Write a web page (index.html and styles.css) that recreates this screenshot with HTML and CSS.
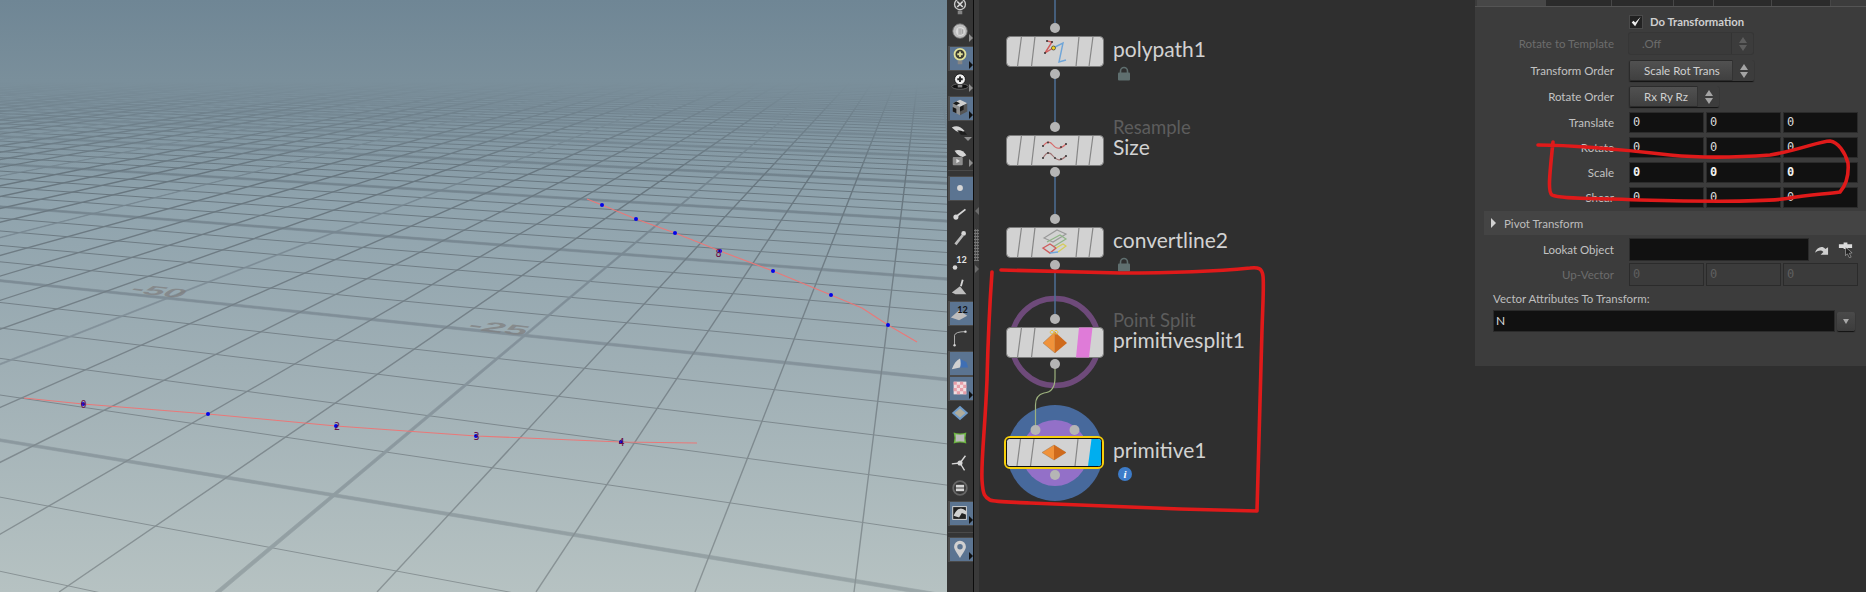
FILE: index.html
```html
<!DOCTYPE html>
<html lang="en">
<head>
<meta charset="utf-8">
<title>Houdini</title>
<link rel="stylesheet" href="styles.css">
</head>
<body>
<div class="app">
  <section class="viewport">
    <svg id="scene" class="scene" width="947" height="592" viewBox="0 0 947 592">
      <defs>
        <linearGradient id="sky" x1="0" y1="0" x2="0" y2="1">
          <stop offset="0" stop-color="#6f8695"/>
          <stop offset=".17" stop-color="#7a8f9b"/>
          <stop offset=".34" stop-color="#8fa3ad"/>
          <stop offset=".62" stop-color="#9fafb5"/>
          <stop offset="1" stop-color="#b6c2c2"/>
        </linearGradient>
        <linearGradient id="fog" x1="0" y1="0" x2="0" y2="1">
          <stop offset="0" stop-color="#6f8695"/>
          <stop offset=".3" stop-color="#7a8f9b"/>
          <stop offset=".42" stop-color="#7f939f" stop-opacity=".5"/>
          <stop offset=".65" stop-color="#8fa3ad" stop-opacity="0"/>
        </linearGradient>
        <linearGradient id="thin" gradientUnits="userSpaceOnUse" x1="0" y1="100" x2="0" y2="592">
          <stop offset="0" stop-color="#5f6f79"/>
          <stop offset=".5" stop-color="#77838a"/>
          <stop offset="1" stop-color="#8a9496"/>
        </linearGradient>
        <linearGradient id="thick" gradientUnits="userSpaceOnUse" x1="0" y1="100" x2="0" y2="592">
          <stop offset="0" stop-color="#6a7c87"/>
          <stop offset=".5" stop-color="#83919a"/>
          <stop offset="1" stop-color="#98a4a6"/>
        </linearGradient>
      </defs>
      <rect class="sky" width="947" height="592"/>
      <g id="grid"></g>
      <rect class="fog" width="947" height="270"/>
      <text class="ground" transform="matrix(2.25 .26 -.95 .72 128 292)">-50</text>
      <text class="ground" transform="matrix(2.5 .28 -.75 .8 466 329)">-25</text>
      <polyline class="curve" points="24,398 83,404 208,414 336,426 476,436 621,442 697,443"/>
      <polyline class="curve" points="587,199 602,205 636,219 675,233 720,251 773,271 831,295 862,308 888,325 917,342"/>
      <g class="pts">
        <circle cx="83" cy="404" r="2"/><circle cx="208" cy="414" r="2"/><circle cx="336" cy="426" r="2"/><circle cx="476" cy="436" r="2"/><circle cx="621" cy="442" r="2"/>
        <circle cx="602" cy="205" r="2"/><circle cx="636" cy="219" r="2"/><circle cx="675" cy="233" r="2"/><circle cx="720" cy="251" r="2"/><circle cx="773" cy="271" r="2"/><circle cx="831" cy="295" r="2"/><circle cx="888" cy="325" r="2"/>
      </g>
      <g class="ptnum">
        <text x="80.500" y="408">0</text><text x="334" y="430">2</text><text x="473.500" y="440">3</text><text x="618.500" y="446">4</text><text x="715.500" y="257">8</text>
      </g>
    </svg>
  </section>

  <nav class="toolbar">
    <div class="tb first"><svg class="ic" viewBox="0 0 22 22"><circle class="bulb-dark" cx="11" cy="8" r="6"/><path class="x" d="M8 5l6 6M14 5l-6 6"/><rect class="base" x="8.500" y="15" width="5" height="4"/></svg></div>
    <div class="tb more"><svg class="ic" viewBox="0 0 22 22"><circle class="disc" cx="11" cy="10" r="8"/><circle class="disc-in" cx="11.500" cy="10.500" r="5"/><path class="tick" d="M10 7v7M12 7v7M14 8v5"/></svg></div>
    <div class="tb more on"><svg class="ic" viewBox="0 0 22 22"><circle class="bulb-y" cx="11" cy="8" r="6"/><path class="plus" d="M11 5v6M8 8h6"/><rect class="base" x="8.500" y="15" width="5" height="4"/></svg></div>
    <div class="tb more"><svg class="ic" viewBox="0 0 22 22"><ellipse class="ring" cx="11" cy="16" rx="9" ry="3"/><circle class="bulb-w" cx="11" cy="8" r="6"/><path class="plus" d="M11 5v6M8 8h6"/><rect class="base" x="8.500" y="14" width="5" height="3"/></svg></div>
    <div class="tb more on"><svg class="ic" viewBox="0 0 22 22"><path class="c-l" d="M3 7l8 4v9l-8-4z"/><path class="c-t" d="M3 7l8-4 8 4-8 4z"/><path class="c-r" d="M11 11l8-4v9l-8 4z"/><path class="c-d" d="M3 7l4-2 4 2-4 2zM11 11l4-2v5l-4 2zM3 11l4 2v5l-4-2z"/></svg></div>
    <div class="tb more down"><svg class="ic" viewBox="0 0 22 22"><path class="eye" d="M2 6c5-3 10-1 14 4l-4 2C8 11 5 9 2 6z"/><path class="eye-d" d="M8 9c3 0 6 1 8 2l3 3-7 0z"/></svg></div>
    <div class="tb more"><svg class="ic" viewBox="0 0 22 22"><path class="eye" d="M5 4c5-2 10 0 13 5l-4 2C10 10 8 8 5 4z"/><rect class="cam" x="3" y="11" width="11" height="9" rx="1"/><path class="play" d="M7 13l4 2.500-4 2.500z"/></svg></div>
    <div class="tsep s6"></div>
    <div class="tb on"><svg class="ic" viewBox="0 0 22 22"><circle class="pt" cx="11" cy="11" r="3.200"/></svg></div>
    <div class="tb"><svg class="ic" viewBox="0 0 22 22"><circle class="pt" cx="6.500" cy="15.500" r="2.800"/><path class="stem" d="M8 14L17 7"/></svg></div>
    <div class="tb"><svg class="ic" viewBox="0 0 22 22"><circle class="pt" cx="15" cy="6" r="2.600"/><path class="stem2" d="M14 8L6 18"/></svg></div>
    <div class="tb"><svg class="ic" viewBox="0 0 22 22"><circle class="pt" cx="5.500" cy="16" r="2.500"/><text class="num" x="7" y="11">12</text></svg></div>
    <div class="tb"><svg class="ic" viewBox="0 0 22 22"><path class="broom" d="M2 16l9-7 7 9H6z"/><path class="stem" d="M12 9l2-7"/></svg></div>
    <div class="tb on"><svg class="ic" viewBox="0 0 22 22"><path class="broom" d="M1 16l9-8 9 6-9 5z"/><text class="num" x="8" y="11">12</text></svg></div>
    <div class="tb"><svg class="ic" viewBox="0 0 22 22"><path class="arc" d="M5 19V8Q6 4 17 4"/><circle class="pt" cx="5" cy="19" r="1.300"/><circle class="pt" cx="17" cy="4" r="1.300"/></svg></div>
    <div class="tb on"><svg class="ic" viewBox="0 0 22 22"><path class="blue" d="M10 6l8 4 2 6-9 0z"/><path class="lite" d="M2 18c2-6 5-10 9-12 1 4 1 7 0 10z"/></svg></div>
    <div class="tb more on"><svg class="ic" viewBox="0 0 22 22"><rect class="ck-a" x="4" y="4" width="14" height="14"/><path class="ck-b" d="M4 4h3.500v3.500H4zM11 4h3.500v3.500H11zM7.500 7.500H11V11H7.500zM14.500 7.500H18V11h-3.500zM4 11h3.500v3.500H4zM11 11h3.500v3.500H11zM7.500 14.500H11V18H7.500zM14.500 14.500H18V18h-3.500z"/></svg></div>
    <div class="tb"><svg class="ic" viewBox="0 0 22 22"><path class="dia-b" d="M11 3l9 8-9 8-9-8z"/><path class="dia-g" d="M11 6l6 5-6 5-6-5z"/></svg></div>
    <div class="tb"><svg class="ic" viewBox="0 0 22 22"><path class="gr-o" d="M4 5q7 2 14 0-2 6 0 12-7-2-14 0 2-6 0-12z"/><path class="gr-i" d="M6 7q5 1 10 0-1 4 0 8-5-1-10 0 1-4 0-8z"/></svg></div>
    <div class="tb"><svg class="ic" viewBox="0 0 22 22"><path class="spoke" d="M11 11L17 3M11 11L2 12M11 11l5 8"/><circle class="pt" cx="11" cy="11" r="2.800"/></svg></div>
    <div class="tb"><svg class="ic" viewBox="0 0 22 22"><circle class="ring2" cx="11" cy="11" r="7.500"/><rect class="pt" x="6.500" y="7.500" width="9" height="3"/><rect class="pt" x="6.500" y="11.500" width="9" height="3"/></svg></div>
    <div class="tb more on"><svg class="ic" viewBox="0 0 22 22"><rect class="frame" x="3" y="4" width="15" height="14"/><path class="lite" d="M4 14c2-5 5-8 8-8 2 0 5 2 6 3v4l-5-2-3 5z"/></svg></div>
    <div class="tsep s11"></div>
    <div class="tb more on"><svg class="ic" viewBox="0 0 22 22"><path class="lite" d="M11 2a6.500 6.500 0 0 1 6.500 6.500C17.500 12 13 17 11 21 9 17 4.500 12 4.500 8.500A6.500 6.500 0 0 1 11 2z"/><circle class="hole" cx="11" cy="8.500" r="3"/></svg></div>
  </nav>

  <div class="sash">
    <span class="tri-l"></span>
    <span class="grip"></span>
    <span class="tri-r"></span>
  </div>

  <main class="network">
    <div class="canvas">
      <svg class="wires" width="496" height="592" viewBox="979 0 496 592">
        <circle class="ring-p" cx="1055" cy="342" r="43.500"/>
        <circle class="halo-b" cx="1055" cy="453" r="48"/>
        <circle class="halo-p" cx="1055" cy="453" r="33"/>
        <path class="wire-b" d="M1055 0V28M1055 74V127M1055 172V219M1055 265V319"/>
        <path class="wire-g" d="M1055 364V378Q1055 392 1044 393Q1035.500 395 1035.500 405V430"/>
        <g class="dots">
          <circle cx="1055" cy="28" r="5"/><circle cx="1055" cy="74" r="5"/>
          <circle cx="1055" cy="127" r="5"/><circle cx="1055" cy="172" r="5"/>
          <circle cx="1055" cy="219" r="5"/><circle cx="1055" cy="265" r="5"/>
          <circle cx="1055" cy="319" r="5"/><circle cx="1055" cy="364" r="5"/>
          <circle cx="1035.500" cy="430" r="5"/><circle cx="1074.500" cy="430" r="5"/><circle cx="1055" cy="475" r="5"/>
        </g>
      </svg>

      <div class="node n-poly">
        <svg class="tile" viewBox="0 0 98 31">
          <rect class="body" x=".5" y=".5" width="97" height="30" rx="4"/>
          <path class="stripe" d="M15.500 .5L11.500 30.500M29 .5L25.500 30.500M73 .5L70 30.500M87 .5L83 30.500"/>
          <path class="i-red" d="M41 5L46 6 39 17 47 12"/>
          <path class="i-blu" d="M47 12L57 7 53 26 60 24"/>
          <g class="i-blk"><circle cx="41" cy="5" r="1"/><circle cx="46" cy="6" r="1"/><circle cx="39" cy="17" r="1"/></g>
          <circle class="i-yel" cx="47.500" cy="12" r="2"/>
        </svg>
        <div class="lab"><span class="name">polypath1</span>
          <svg class="lock" viewBox="0 0 12 15"><path class="shackle" d="M2.500 7V5a3.500 3.500 0 0 1 7 0v2"/><rect class="lockb" y="6.500" width="12" height="8" rx="1"/></svg>
        </div>
      </div>

      <div class="node n-size">
        <svg class="tile" viewBox="0 0 98 31">
          <rect class="body" x=".5" y=".5" width="97" height="30" rx="4"/>
          <path class="stripe" d="M15.500 .5L11.500 30.500M29 .5L25.500 30.500M73 .5L70 30.500M87 .5L83 30.500"/>
          <path class="i-wave-r" d="M37 11C41 6 44 6 47 10S54 15 60 9"/>
          <path class="i-wave-d" d="M37 23C41 16 44 17 47 21S54 27 60 21"/>
          <g class="i-blk"><circle cx="37" cy="11" r="1"/><circle cx="42" cy="7.500" r=".9"/><circle cx="55" cy="12" r=".9"/><circle cx="60" cy="9" r="1"/><circle cx="37" cy="23" r="1"/><circle cx="42" cy="18" r=".9"/><circle cx="49" cy="23" r=".9"/><circle cx="55" cy="24" r=".9"/><circle cx="60" cy="21" r="1"/></g>
        </svg>
        <div class="lab"><span class="sub">Resample</span><span class="name">Size</span></div>
      </div>

      <div class="node n-conv">
        <svg class="tile" viewBox="0 0 98 31">
          <rect class="body" x=".5" y=".5" width="97" height="30" rx="4"/>
          <path class="stripe" d="M15.500 .5L11.500 30.500M29 .5L25.500 30.500M73 .5L70 30.500M87 .5L83 30.500"/>
          <path class="i-gry" d="M38 11L51 3 60 7 47 15z"/>
          <path class="i-grn" d="M41 15L54 8 60 12 47 20"/>
          <path class="i-red" d="M37 21L44 17 50 21 44 26z"/>
          <path class="i-ylw" d="M50 21L57 17 60 19 52 25"/>
          <path class="i-blu" d="M44 26L52 25"/>
        </svg>
        <div class="lab"><span class="name">convertline2</span>
          <svg class="lock" viewBox="0 0 12 15"><path class="shackle" d="M2.500 7V5a3.500 3.500 0 0 1 7 0v2"/><rect class="lockb" y="6.500" width="12" height="8" rx="1"/></svg>
        </div>
      </div>

      <div class="node n-split">
        <svg class="tile" viewBox="0 0 98 31">
          <rect class="body" x=".5" y=".5" width="97" height="30" rx="4"/>
          <path class="stripe" d="M15.500 .5L11.500 30.500M29 .5L25.500 30.500"/>
          <path class="band-p" d="M73 .5H86.500L83 30.500H70z"/>
          <path class="o-l" d="M37 16L49 5V26z"/>
          <path class="o-r" d="M49 5L61 16 49 26z"/>
          <path class="o-loop" d="M46 7a1.800 1.800 0 1 1 .1 0M50 7a1.800 1.800 0 1 1 .1 0"/>
        </svg>
        <div class="lab"><span class="sub">Point Split</span><span class="name">primitivesplit1</span></div>
      </div>

      <div class="node n-prim">
        <svg class="tile sel" viewBox="0 0 100 33">
          <rect class="sel-y" x="1" y="1" width="98" height="31" rx="5"/>
          <rect class="body-s" x="2.500" y="2.500" width="95" height="28" rx="3"/>
          <path class="band-b" d="M87.500 3H94a3 3 0 0 1 3 3V27a3 3 0 0 1-3 3H84z"/>
          <path class="stripe" d="M16.500 3L13 30M30 3L26.500 30M74 3L71 30"/>
          <path class="o-l" d="M38 16.500L50 9 62 16.500 50 24z"/>
          <path class="o-r" d="M50 9L62 16.500 50 24z"/>
        </svg>
        <div class="lab"><span class="name">primitive1</span>
          <span class="info">i</span>
        </div>
      </div>
    </div>

    <aside class="panel">
      <div class="tabs"><span class="tab cur"></span><span class="tab t1"></span><span class="tab t2"></span><span class="tab t3"></span><span class="tab t4"></span><span class="tab t5"></span></div>

      <div class="row r-do">
        <span class="rl"></span>
        <span class="check"><svg viewBox="0 0 14 14"><path d="M2 7.500L6 12 12.500 1 6.200 7.500 4 5.500z"/></svg></span>
        <b class="dolab">Do Transformation</b>
      </div>
      <div class="row m0 off"><label class="rl">Rotate to Template</label>
        <div class="drop w124"><span class="dt">&nbsp;.Off</span><span class="arr"><i class="au"></i><i class="ad"></i></span></div></div>
      <div class="row m6"><label class="rl">Transform Order</label>
        <div class="drop w125"><span class="dt">Scale Rot Trans</span><span class="arr"><i class="au"></i><i class="ad"></i></span></div></div>
      <div class="row m5"><label class="rl">Rotate Order</label>
        <div class="drop w90"><span class="dt">Rx Ry Rz</span><span class="arr"><i class="au"></i><i class="ad"></i></span></div></div>
      <div class="row m5"><label class="rl">Translate</label><div class="vec"><span class="fld">0</span><span class="fld">0</span><span class="fld">0</span></div></div>
      <div class="row m4"><label class="rl">Rotate</label><div class="vec"><span class="fld">0</span><span class="fld">0</span><span class="fld">0</span></div></div>
      <div class="row m4"><label class="rl">Scale</label><div class="vec"><span class="fld bright">0</span><span class="fld bright">0</span><span class="fld bright">0</span></div></div>
      <div class="row m4"><label class="rl">Shear</label><div class="vec"><span class="fld">0</span><span class="fld">0</span><span class="fld">0</span></div></div>
      <div class="folder"><span class="ftri"></span>Pivot Transform</div>
      <div class="row m3 tall"><label class="rl">Lookat Object</label>
        <span class="fld wide"></span>
        <svg class="act a1" viewBox="0 0 16 12"><path d="M1 9C3 3 9 1 12 5L15 3V11H7l3-3C8 6 5 6 1 9z"/></svg>
        <svg class="act a2" viewBox="0 0 18 16"><path d="M7 0h4v2h5v4H11v1H7V6H2V2h5z"/><path class="cursor" d="M9 5l7 6-3 .5 2 4-2 .5-2-4-2 2z"/></svg>
      </div>
      <div class="row m2 tall off"><label class="rl">Up-Vector</label><div class="vec dis"><span class="fld">0</span><span class="fld">0</span><span class="fld">0</span></div></div>
      <div class="vlab">Vector Attributes To Transform:</div>
      <div class="vrow"><span class="fld long">N</span><span class="vbtn"><i></i></span></div>
    </aside>
  </main>
</div>

<svg class="marks" width="1866" height="592" viewBox="0 0 1866 592">
  <path d="M992 272C990 300 988 340 987 380 985 430 981 460 982 480 983 496 985 497 990 500 995 502 1010 502 1030 503 1080 505 1130 507 1180 509L1257 511C1258 480 1260 400 1262 330 1263 300 1264 285 1263 276 1262 268 1258 267 1250 268 1220 271 1190 273 1120 273L1001 270"/>
  <path d="M1538 145C1553 145 1600 147 1670 155 1700 158 1730 158 1770 155 1800 150 1820 141 1830 141 1838 142 1845 152 1848 163 1849 175 1846 185 1840 192 1825 194 1808 195 1790 198 1770 202 1720 202 1640 200 1590 198 1560 199 1552 195 1548 192 1549 180 1553 142"/>
</svg>
<script src="grid.js"></script>
</body>
</html>
```

FILE: styles.css
```css
* { box-sizing: border-box; }
html, body { margin: 0; height: 100%; background: #2f2f2f; overflow: hidden; }
body { position: relative; width: 1866px; height: 592px; font-family: "Lato", "Noto Sans", sans-serif; }
.app { display: flex; width: 1866px; height: 592px; }

/* viewport */
.viewport { width: 947px; height: 592px; flex: none; overflow: hidden; }
.scene { display: block; }
.sky { fill: url(#sky); }
.fog { fill: url(#fog); }
.ln-thin { stroke: url(#thin); stroke-width: 1; }
.ln-thin.ln-b { stroke-width: 1.4; }
.ln-thick { fill: url(#thick); stroke: url(#thick); stroke-width: .6; }
.ground { font: bold 16px "Liberation Sans", sans-serif; fill: #7f7f80; opacity: .75; }
.curve { fill: none; stroke: #ea7878; stroke-width: 1.1; }
.pts circle { fill: #0404e8; }
.ptnum text { font: 10px "DejaVu Sans Mono", monospace; fill: #6a1048; }

/* toolbar */
.toolbar { width: 27px; flex: none; height: 592px; background: #353535; border-right: 1px solid #0c0c0c; padding-left: 1px; overflow: hidden; display: flex; flex-direction: column; }
.tb { width: 24px; height: 25px; flex: none; display: flex; align-items: center; justify-content: center; position: relative; }
.tb.first { margin-top: -5.5px; }
.tb.on::before { content: ""; position: absolute; left: 0; top: 1px; width: 24px; height: 23px; background: #5b7491; border: 1px solid #4a4a4a; border-width: 1px 2px; }
.tb .ic { width: 20px; height: 20px; position: relative; }
.tb.more::after { content: ""; position: absolute; right: -1px; bottom: 3px; border-left: 4px solid #8e8e8e; border-top: 4px solid transparent; border-bottom: 4px solid transparent; }
.tb.more.on::after { border-left-color: #111; bottom: 1px; }
.tb.more.down::after { right: 0; bottom: 4px; border-top: 4px solid #8e8e8e; border-left: 4px solid transparent; border-right: 4px solid transparent; border-bottom: 0; }
.tsep { flex: none; position: relative; }
.tsep.s6 { height: 5.5px; border-top: 1px solid #4a4a4a; }
.tsep.s11 { height: 11px; border-top: 1px solid #4a4a4a; margin-top: 7px; margin-bottom: -7px; }

.bulb-dark { fill: #3a3a3a; stroke: #c8c8c8; stroke-width: 1.5; }
.x { stroke: #d8d8d8; stroke-width: 1.8; fill: none; }
.base { fill: #858585; }
.disc { fill: #bdbdbd; stroke: #6d6d6d; }
.disc-in { fill: #d8d8d8; }
.tick { stroke: #8d8d8d; fill: none; }
.bulb-y { fill: #3b3b32; stroke: #e0e09a; stroke-width: 2; }
.bulb-w { fill: #efefef; stroke: #111; stroke-width: 1; }
.plus { stroke: #222; stroke-width: 2; fill: none; }
.bulb-y + .plus { stroke: #e0e09a; }
.ring { fill: #111; stroke: #666; }
.c-l { fill: #8f8f8f; } .c-t { fill: #cfcfcf; } .c-r { fill: #555; } .c-d { fill: #1a1a1a; }
.eye { fill: #d5d5d5; }
.eye-d { fill: #1d1d1d; }
.cam { fill: #8e8e8e; }
.play { fill: #e2e2e2; }
.pt { fill: #d6d6d6; }
.stem { stroke: #d6d6d6; stroke-width: 2; fill: none; }
.stem2 { stroke: #bbb; stroke-width: 3; fill: none; }
.num { font: bold 10px "Lato", sans-serif; fill: #e6e6e6; }
.broom { fill: #bdbdbd; }
.tb.on .num { fill: #111; }
.arc { fill: none; stroke: #bcbcbc; stroke-width: 1; }
.blue { fill: #3f6fb5; }
.lite { fill: #d0d0d0; }
.ck-a { fill: #f0dde0; }
.ck-b { fill: #e58f9a; opacity: .8; }
.dia-b { fill: #6f9bc9; }
.dia-g { fill: #b0ad9c; }
.gr-o { fill: #68b33c; }
.gr-i { fill: #b9b9b9; }
.spoke { stroke: #d6d6d6; stroke-width: 1.5; fill: none; }
.ring2 { fill: none; stroke: #666; stroke-width: 2; }
.frame { fill: #222; stroke: #ddd; stroke-width: 1; }
.hole { fill: #5b7491; }

/* sash */
.sash { width: 5px; flex: none; height: 592px; background: #3a3a3a; position: relative; display: flex; flex-direction: column; align-items: center; }
.tri-l { margin-top: 207px; border-right: 4px solid #6b6b6b; border-top: 4px solid transparent; border-bottom: 4px solid transparent; }
.grip { margin-top: 14px; width: 5px; height: 32px; background-image: radial-gradient(circle, #777 0 1px, transparent 1.2px); background-size: 2.5px 3px; }
.tri-r { margin-top: 4px; border-left: 4px solid #6b6b6b; border-top: 4px solid transparent; border-bottom: 4px solid transparent; }

/* network */
.network { flex: 1; display: flex; align-items: flex-start; background: #2f2f2f; height: 592px; min-width: 0; }
.canvas { width: 496px; height: 592px; flex: none; position: relative; }
.wires { position: absolute; left: 0; top: 0; }
.ring-p { fill: none; stroke: #6e4a7a; stroke-width: 5.5; }
.halo-b { fill: #47699c; }
.halo-p { fill: #9370c8; }
.wire-b { fill: none; stroke: #4e6f95; stroke-width: 1.5; }
.wire-g { fill: none; stroke: #9db27e; stroke-width: 1.2; }
.dots circle { fill: #b5b5b5; }

.node { position: absolute; left: 27px; display: flex; align-items: center; gap: 9px; height: 31px; }
.n-poly { top: 36px; }
.n-size { top: 134.5px; }
.n-conv { top: 227px; }
.n-split { top: 327px; }
.n-prim { top: 437px; left: 25px; }
.tile { width: 98px; height: 31px; flex: none; display: block; }
.tile.sel { width: 100px; height: 33px; }
.body { fill: #d2d2d2; stroke: #7b7b7b; }
.body-s { fill: #d2d2d2; stroke: #111; stroke-width: 1; }
.sel-y { fill: #111; stroke: #f7cf0a; stroke-width: 2; }
.stripe { stroke: #868686; stroke-width: 1.2; fill: none; }
.band-p { fill: #df7bd8; }
.band-b { fill: #00aeef; }
.o-l { fill: #f0923a; stroke: #9a7550; stroke-width: .5; }
.o-r { fill: #cf6a1c; }
.o-loop { fill: none; stroke: #e7c040; stroke-width: 1; }
.i-red { fill: none; stroke: #cf5c5c; stroke-width: 1.4; }
.i-blu { fill: none; stroke: #6fa5d8; stroke-width: 1.4; }
.i-blk circle { fill: #333; }
.i-yel { fill: #f2d21f; stroke: #222; stroke-width: .6; }
.i-wave-r { fill: none; stroke: #d66a6a; stroke-width: 1.2; }
.i-wave-d { fill: none; stroke: #a07272; stroke-width: 1.2; }
.i-gry { fill: none; stroke: #9a9a9a; stroke-width: 1.2; }
.i-grn { fill: none; stroke: #8fb587; stroke-width: 1.2; }
.i-ylw { fill: none; stroke: #d4cc59; stroke-width: 1.2; }

.lab { position: relative; top: -3px; color: #d2d2d2; white-space: nowrap; line-height: 24px; }
.name { font-size: 21px; display: block; }
.sub { position: absolute; left: 0; bottom: 20px; font-size: 18.5px; color: #5d5d5d; }
.lock { position: absolute; left: 5px; top: 29px; width: 12px; height: 15px; }
.shackle { fill: none; stroke: #5f6f6f; stroke-width: 1.6; }
.lockb { fill: #5f6f6f; }
.info { position: absolute; left: 5px; top: 29px; width: 14px; height: 14px; border-radius: 50%; background: #3d7cc9; color: #fff; font: italic bold 11px/14px "Liberation Serif", serif; text-align: center; }

/* parameters */
.panel { width: 391px; height: 366px; flex: none; background: #3c3c3c; font-size: 11.5px; color: #c2c2c2; }
.tabs { height: 7px; display: flex; padding-left: 2px; border-bottom: 1px solid #545454; }
.tab { height: 6px; background: #2b2b2b; border-right: 1px solid #474747; }
.tab.cur { width: 69px; background: #474747; }
.t1 { width: 66px; } .t2 { width: 62px; } .t3 { width: 40px; } .t4 { width: 58px; } .t5 { width: 59px; }
.row { display: flex; align-items: center; height: 21px; }
.row.tall { height: 23px; }
.m0 { margin-top: 0; } .m2 { margin-top: 2px; } .m3 { margin-top: 3px; } .m4 { margin-top: 4px; } .m5 { margin-top: 5px; } .m6 { margin-top: 6px; }
.rl { width: 139px; text-align: right; flex: none; margin-right: 15px; }
.off { color: #6c6c6c; }
.r-do { margin-top: 8px; margin-bottom: 4px; height: 14px; }
.check { width: 14px; height: 14px; background: #222; border: 1px solid #4a4a4a; flex: none; }
.check svg { display: block; width: 12px; height: 12px; fill: #eee; }
.dolab { margin-left: 7px; font-size: 11.3px; color: #cfcfcf; position: relative; top: -1px; }
.drop { display: flex; height: 21px; background: linear-gradient(#525252, #3f3f3f); border-radius: 2px; box-shadow: 0 1px 1px #111, inset 0 0 0 1px #2b2b2b; align-items: center; }
.w124 { width: 124px; } .w125 { width: 125px; } .w90 { width: 90px; }
.off .drop { background: #3a3a3a; box-shadow: 0 0 0 1px #363636; }
.dt { flex: 1; padding-left: 15px; white-space: nowrap; color: #d0d0d0; }
.off .dt { color: #6c6c6c; padding-left: 10px; }
.arr { width: 22px; height: 100%; background: #3c3c3c; border-left: 1px solid #333; display: flex; flex-direction: column; align-items: center; justify-content: center; gap: 2px; border-radius: 0 2px 2px 0; }
.au { border-bottom: 6px solid #a4a4a4; border-left: 4px solid transparent; border-right: 4px solid transparent; }
.ad { border-top: 6px solid #a4a4a4; border-left: 4px solid transparent; border-right: 4px solid transparent; }
.off .au { border-bottom-color: #5e5e5e; } .off .ad { border-top-color: #5e5e5e; }
.vec { display: flex; gap: 2px; }
.fld { display: block; width: 75px; height: 21px; background: #111; border: 1px solid #333; outline: 1px solid #2b2b2b; outline-offset: -1px; padding-left: 3px; font: 12px/19px "DejaVu Sans Mono", monospace; color: #d9d9d9; }
.row.tall .vec .fld { height: 23px; line-height: 21px; }
.bright { font-weight: bold; color: #f2f2f2; }
.dis .fld { background: #3b3b3b; color: #5f5f5f; border-color: #333; }
.folder { margin-top: 3px; margin-left: 9px; height: 24px; background: #444; display: flex; align-items: center; color: #bdbdbd; }
.ftri { margin: 0 8px 0 7px; border-left: 5px solid #d0d0d0; border-top: 5px solid transparent; border-bottom: 5px solid transparent; }
.fld.wide { width: 180px; height: 23px; }
.act { flex: none; }
.a1 { width: 15px; height: 12px; margin-left: 5px; fill: #cfcfcf; }
.a2 { width: 17px; height: 16px; margin-left: 8px; fill: #dcdcdc; }
.cursor { fill: #222; stroke: #ddd; stroke-width: .5; }
.vlab { margin: 6px 0 0 18px; height: 18px; line-height: 14px; color: #bebebe; }
.vrow { display: flex; margin-left: 18px; gap: 2px; align-items: center; }
.fld.long { width: 342px; height: 22px; font-family: "Lato", sans-serif; line-height: 20px; padding-left: 2px; }
.vbtn { width: 18px; height: 19px; background: linear-gradient(#4a4a4a, #3c3c3c); border-radius: 2px; box-shadow: 0 1px 1px #111; display: flex; align-items: center; justify-content: center; }
.vbtn i { border-top: 5px solid #a8a8a8; border-left: 3.5px solid transparent; border-right: 3.5px solid transparent; }

/* hand-drawn annotation */
.marks { position: absolute; left: 0; top: 0; pointer-events: none; }
.marks path { fill: none; stroke: #e01a1a; stroke-width: 3.6; stroke-linecap: round; stroke-linejoin: round; }
```

FILE: grid.js
```js
// Ground-plane grid: two families of lines, each converging on a vanishing point.
(function () {
  var NS = 'http://www.w3.org/2000/svg';
  var g = document.getElementById('grid');
  var W = 947, H = 592;
  function add(tag, attrs) {
    var el = document.createElementNS(NS, tag);
    for (var k in attrs) el.setAttribute(k, attrs[k]);
    g.appendChild(el);
  }
  var vaX = -2640, vaY = 5;
  var vbX = 928, vbY = -2;
  // family running left to right
  for (var i = -50; i <= 15; i++) {
    var k = i / 5;
    var inv = 0.004958 - 0.00133 * k;
    if (inv <= 0) continue;
    var h0 = 1 / inv;
    var y0 = vaY + h0;
    var r = (W - vaX) / (-vaX);
    var y1 = vaY + h0 * r;
    if (i % 5 === 0) {
      var w = (1 + h0 / 435 * 1.8) / 2;
      add('polygon', { 'class': 'ln-thick', points: '0,' + (y0 - w) + ' ' + W + ',' + (y1 - w * r) + ' ' + W + ',' + (y1 + w * r) + ' 0,' + (y0 + w) });
    } else {
      add('line', { 'class': 'ln-thin', x1: 0, y1: y0, x2: W, y2: y1 });
    }
  }
  // family running towards the upper right
  for (var n = -75; n <= 6; n++) {
    var xb = 218 + 159 * n;
    if (((n % 5) + 5) % 5 === 0) {
      add('polygon', { 'class': 'ln-thick', points: vbX + ',' + vbY + ' ' + (xb - 3) + ',' + H + ' ' + (xb + 3) + ',' + H });
    } else {
      add('line', { 'class': 'ln-thin ln-b', x1: vbX, y1: vbY, x2: xb, y2: H });
    }
  }
})();
```
